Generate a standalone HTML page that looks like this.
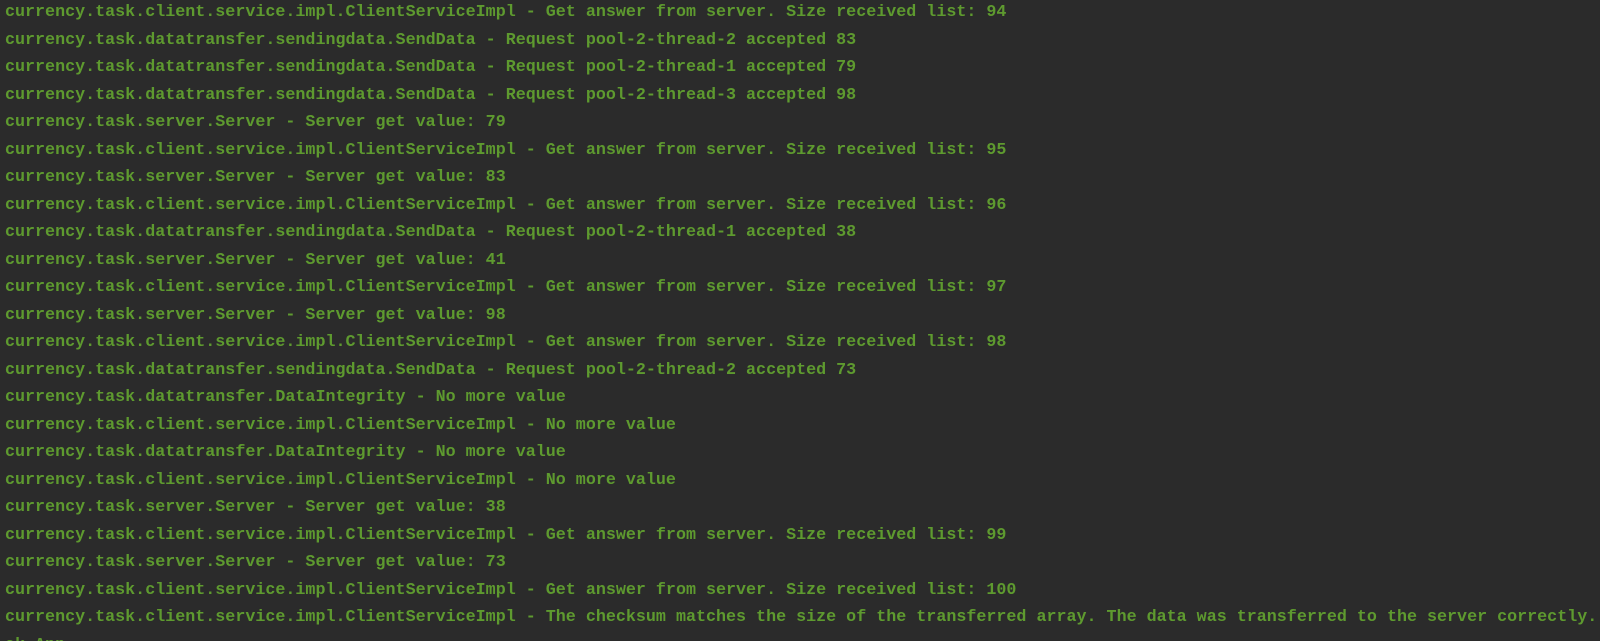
<!DOCTYPE html>
<html><head><meta charset="utf-8"><style>
html,body{margin:0;padding:0;background:#2b2b2b;width:1600px;height:641px;overflow:hidden;position:relative}
div{position:absolute;left:5px;margin:0;font-family:"Liberation Mono","DejaVu Sans Mono",monospace;font-size:16.7px;line-height:20px;height:20px;color:#5e9a2f;font-weight:bold;white-space:pre}
</style></head><body>
<div style="top:3px">currency.task.client.service.impl.ClientServiceImpl - Get answer from server. Size received list: 94</div>
<div style="top:30.5px">currency.task.datatransfer.sendingdata.SendData - Request pool-2-thread-2 accepted 83</div>
<div style="top:58px">currency.task.datatransfer.sendingdata.SendData - Request pool-2-thread-1 accepted 79</div>
<div style="top:85.5px">currency.task.datatransfer.sendingdata.SendData - Request pool-2-thread-3 accepted 98</div>
<div style="top:113px">currency.task.server.Server - Server get value: 79</div>
<div style="top:140.5px">currency.task.client.service.impl.ClientServiceImpl - Get answer from server. Size received list: 95</div>
<div style="top:168px">currency.task.server.Server - Server get value: 83</div>
<div style="top:195.5px">currency.task.client.service.impl.ClientServiceImpl - Get answer from server. Size received list: 96</div>
<div style="top:223px">currency.task.datatransfer.sendingdata.SendData - Request pool-2-thread-1 accepted 38</div>
<div style="top:250.5px">currency.task.server.Server - Server get value: 41</div>
<div style="top:278px">currency.task.client.service.impl.ClientServiceImpl - Get answer from server. Size received list: 97</div>
<div style="top:305.5px">currency.task.server.Server - Server get value: 98</div>
<div style="top:333px">currency.task.client.service.impl.ClientServiceImpl - Get answer from server. Size received list: 98</div>
<div style="top:360.5px">currency.task.datatransfer.sendingdata.SendData - Request pool-2-thread-2 accepted 73</div>
<div style="top:388px">currency.task.datatransfer.DataIntegrity - No more value</div>
<div style="top:415.5px">currency.task.client.service.impl.ClientServiceImpl - No more value</div>
<div style="top:443px">currency.task.datatransfer.DataIntegrity - No more value</div>
<div style="top:470.5px">currency.task.client.service.impl.ClientServiceImpl - No more value</div>
<div style="top:498px">currency.task.server.Server - Server get value: 38</div>
<div style="top:525.5px">currency.task.client.service.impl.ClientServiceImpl - Get answer from server. Size received list: 99</div>
<div style="top:553px">currency.task.server.Server - Server get value: 73</div>
<div style="top:580.5px">currency.task.client.service.impl.ClientServiceImpl - Get answer from server. Size received list: 100</div>
<div style="top:608px">currency.task.client.service.impl.ClientServiceImpl - The checksum matches the size of the transferred array. The data was transferred to the server correctly.</div>
<div style="top:635.5px">ak.App</div>
</body></html>
